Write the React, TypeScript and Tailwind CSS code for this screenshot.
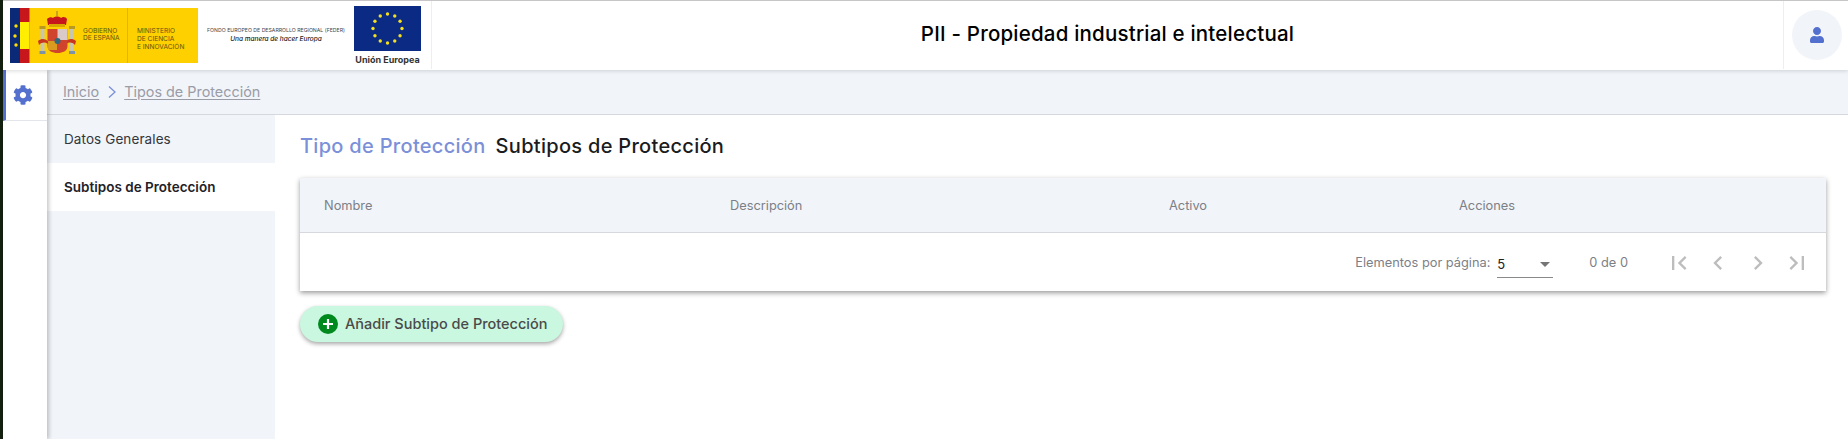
import React from "react";
import { FaCog, FaUser } from "react-icons/fa";

const font = { fontFamily: '"Inter", "Noto Sans", sans-serif' };

function SpainLogo() {
  return (
    <svg width="188" height="55" viewBox="0 0 188 55" className="shrink-0">
      <rect width="188" height="55" fill="#ffd000" />
      <rect width="10" height="55" fill="#0a2a78" />
      <rect x="10" width="9.500" height="55" fill="#c8161d" />
      <rect x="10" y="14" width="9.500" height="27" fill="#ffee00" />
      <g fill="#ffdd00">
        <circle cx="6" cy="18" r="1.700" />
        <circle cx="5" cy="28" r="1.700" />
        <circle cx="6" cy="37" r="1.700" />
      </g>
      <rect x="30.500" y="21" width="4" height="22" fill="#c9c6b0" />
      <rect x="29.500" y="43" width="6" height="3" fill="#7f93a8" />
      <rect x="29.500" y="18" width="6" height="3" fill="#b89a20" />
      <rect x="60" y="21" width="4" height="22" fill="#c9c6b0" />
      <rect x="59" y="43" width="6" height="3" fill="#7f93a8" />
      <rect x="59" y="18" width="6" height="3" fill="#b89a20" />
      <path d="M28 33c4-3 7-2 10 0v3c-3-2-6-2-9 1zM66 33c-4-3-7-2-10 0v3c3-2 6-2 9 1z" fill="#c8361d" />
      <path d="M38 17l-1-6c2-2 5-2 6-1 2-2 6-2 8 0 2-2 5-1 6 1l-1 6z" fill="#c8161d" />
      <rect x="39" y="16" width="16" height="3" fill="#d8a800" />
      <path d="M47 3v5" stroke="#b8962a" strokeWidth="1.500" />
      <path d="M37.500 21h20v17c0 5-5 7-10 7s-10-2-10-7z" fill="#d0432c" />
      <rect x="47.500" y="21" width="10" height="11" fill="#d9c9c9" />
      <rect x="38" y="33" width="9" height="9" fill="#d99a20" />
      <circle cx="47.500" cy="33" r="3" fill="#2b6a80" />
      <line x1="117.500" y1="0" x2="117.500" y2="55" stroke="#e3b400" strokeWidth="1" />
      <g fontFamily="Inter, sans-serif" fontSize="6.600" fill="#5e5210">
        <text x="73" y="24.500">GOBIERNO</text>
        <text x="73" y="32">DE ESPAÑA</text>
        <text x="127" y="24.500">MINISTERIO</text>
        <text x="127" y="32.500">DE CIENCIA</text>
        <text x="127" y="40.500">E INNOVACIÓN</text>
      </g>
    </svg>
  );
}

function EuLogo() {
  const stars = Array.from({ length: 12 }, (_, i) => {
    const a = (i * Math.PI) / 6;
    return [33.500 + 14.500 * Math.sin(a), 22.500 - 14.500 * Math.cos(a)];
  });
  return (
    <svg width="67" height="45" viewBox="0 0 67 45" className="shrink-0">
      <rect width="67" height="45" fill="#0b2a83" />
      {stars.map(([x, y], i) => (
        <circle key={i} cx={x} cy={y} r="1.700" fill="#f4e01c" />
      ))}
    </svg>
  );
}

function PagerIcon({ d }: { d: string }) {
  return (
    <span className="flex w-[39.500px] justify-center">
      <svg width="28" height="28" viewBox="0 0 24 24" fill="#bdbdbd">
        <path d={d} />
      </svg>
    </span>
  );
}

export default function App() {
  return (
    <div style={font} className="flex h-[439px] w-[1848px] overflow-hidden bg-white text-[#1f2228]">
      <div className="w-[3px] shrink-0 bg-[#14200f]" />
      <div className="flex min-w-0 flex-1 flex-col">
        <header className="relative z-20 flex h-[70px] shrink-0 border-t-[1px] border-[#c6c6c6] bg-white shadow-[0_1px_4px_rgba(0,0,0,0.15)]">
          <div className="flex h-[68px] w-[429px] shrink-0 items-center border-r border-[#eceef4] pl-[7px]">
            <SpainLogo />
            <div className="w-[156px] shrink-0 whitespace-nowrap text-center leading-none">
              <div className="text-[5.200px] text-[#444]">FONDO EUROPEO DE DESARROLLO REGIONAL (FEDER)</div>
              <div className="mt-[3px] text-[6.500px] font-medium italic text-[#222]">Una manera de hacer Europa</div>
            </div>
            <div className="flex flex-col items-center">
              <EuLogo />
              <div className="mt-[4px] text-[9px] font-bold leading-none text-[#333]">Unión Europea</div>
            </div>
          </div>
          <div className="flex flex-1 items-center justify-center pb-[2px] text-[20.500px] font-medium tracking-[0.2px] text-black">
            PII - Propiedad industrial e intelectual
          </div>
          <div className="flex h-[68px] w-[65px] shrink-0 items-center justify-start border-l border-[#eceef4] pl-[8px]">
            <div className="flex h-[50px] w-[50px] items-center justify-center rounded-full bg-[#f1f4f8] text-[#5470cf]">
              <FaUser size={16} />
            </div>
          </div>
        </header>
        <div className="flex min-h-0 flex-1">
          <aside className="relative z-10 w-[44px] shrink-0 bg-white shadow-[2px_0_4px_rgba(0,0,0,0.22)]">
            <div className="flex h-[51px] items-center border-b border-l-[3px] border-[#e3e5ea] border-l-[#5470cf] pl-[7px] text-[#5470cf]">
              <FaCog size={20} />
            </div>
          </aside>
          <div className="flex min-w-0 flex-1 flex-col">
            <nav className="flex h-[45px] shrink-0 items-center gap-[6.500px] border-b border-[#d5d8de] bg-[#f1f4f8] pl-[16px] text-[14.400px] text-[#9a9ca8]">
              <span className="underline underline-offset-2">Inicio</span>
              <svg width="12" height="14" viewBox="0 0 12 14" fill="none" stroke="#7b90d8" strokeWidth="1.300">
                <path d="M3 1.500 9 7l-6 5.500" />
              </svg>
              <span className="underline underline-offset-2">Tipos de Protección</span>
            </nav>
            <div className="flex min-h-0 flex-1">
              <div className="w-[228px] shrink-0 bg-[#f1f4f8] pt-[1px] text-[13.500px]">
                <div className="flex h-[47px] items-center pl-[17px] tracking-[0.1px] text-[#33363c]">Datos Generales</div>
                <div className="flex h-[48px] items-center bg-white pl-[17px] font-semibold text-[#1f2228]">Subtipos de Protección</div>
              </div>
              <main className="min-w-0 flex-1 pl-[25px] pr-[22px] pt-[16px]">
                <div className="flex h-[30px] items-center gap-[10px] text-[20px] font-medium tracking-[0.3px]">
                  <span className="text-[#7b90d8]">Tipo de Protección</span>
                  <span className="text-[#1a1c20]">Subtipos de Protección</span>
                </div>
                <section className="mt-[17px] shadow-[0_2px_5px_rgba(0,0,0,0.4)]">
                  <div className="flex h-[55px] items-center border-b border-[#d5d8de] bg-[#f1f4f8] pt-[1px] text-[12.800px] text-[#7c7f87]">
                    <span className="w-[430px] pl-[24px]">Nombre</span>
                    <span className="w-[439px]">Descripción</span>
                    <span className="w-[290px]">Activo</span>
                    <span>Acciones</span>
                  </div>
                  <div className="flex h-[58px] items-center justify-end bg-white pr-[9px] pt-[2px] text-[12.800px] text-[#7c7f87]">
                    <span>Elementos por página:</span>
                    <div className="ml-[7px] flex h-[30px] w-[56px] items-center justify-between border-b border-[#8a8a8a] pr-[3px] pt-[4px] text-[13px] text-[#222]">
                      <span>5</span>
                      <span className="h-0 w-0 border-x-[5px] border-t-[5px] border-x-transparent border-t-[#757575]" />
                    </div>
                    <span className="ml-[36px] mr-[31px] whitespace-nowrap">0 de 0</span>
                    <PagerIcon d="M18.41 16.59L13.82 12l4.59-4.59L17 6l-6 6 6 6zM6 6h2v12H6z" />
                    <PagerIcon d="M15.41 7.41L14 6l-6 6 6 6 1.41-1.41L10.83 12z" />
                    <PagerIcon d="M10 6L8.59 7.41 13.17 12l-4.58 4.59L10 18l6-6z" />
                    <PagerIcon d="M5.59 7.41L10.18 12l-4.59 4.59L7 18l6-6-6-6zM16 6h2v12h-2z" />
                  </div>
                </section>
                <button className="mt-[15px] flex h-[36px] w-[263px] items-center rounded-full bg-[#c9f7df] pl-[18px] text-[14.500px] font-medium text-[#4a4a4a] shadow-[0_2px_4px_rgba(0,0,0,0.35)]">
                  <svg width="20" height="20" viewBox="0 0 20 20" className="mr-[7px] shrink-0">
                    <circle cx="10" cy="10" r="10" fill="#008a1e" />
                    <path d="M10 5v10M5 10h10" stroke="#fff" strokeWidth="2.200" />
                  </svg>
                  Añadir Subtipo de Protección
                </button>
              </main>
            </div>
          </div>
        </div>
      </div>
    </div>
  );
}
